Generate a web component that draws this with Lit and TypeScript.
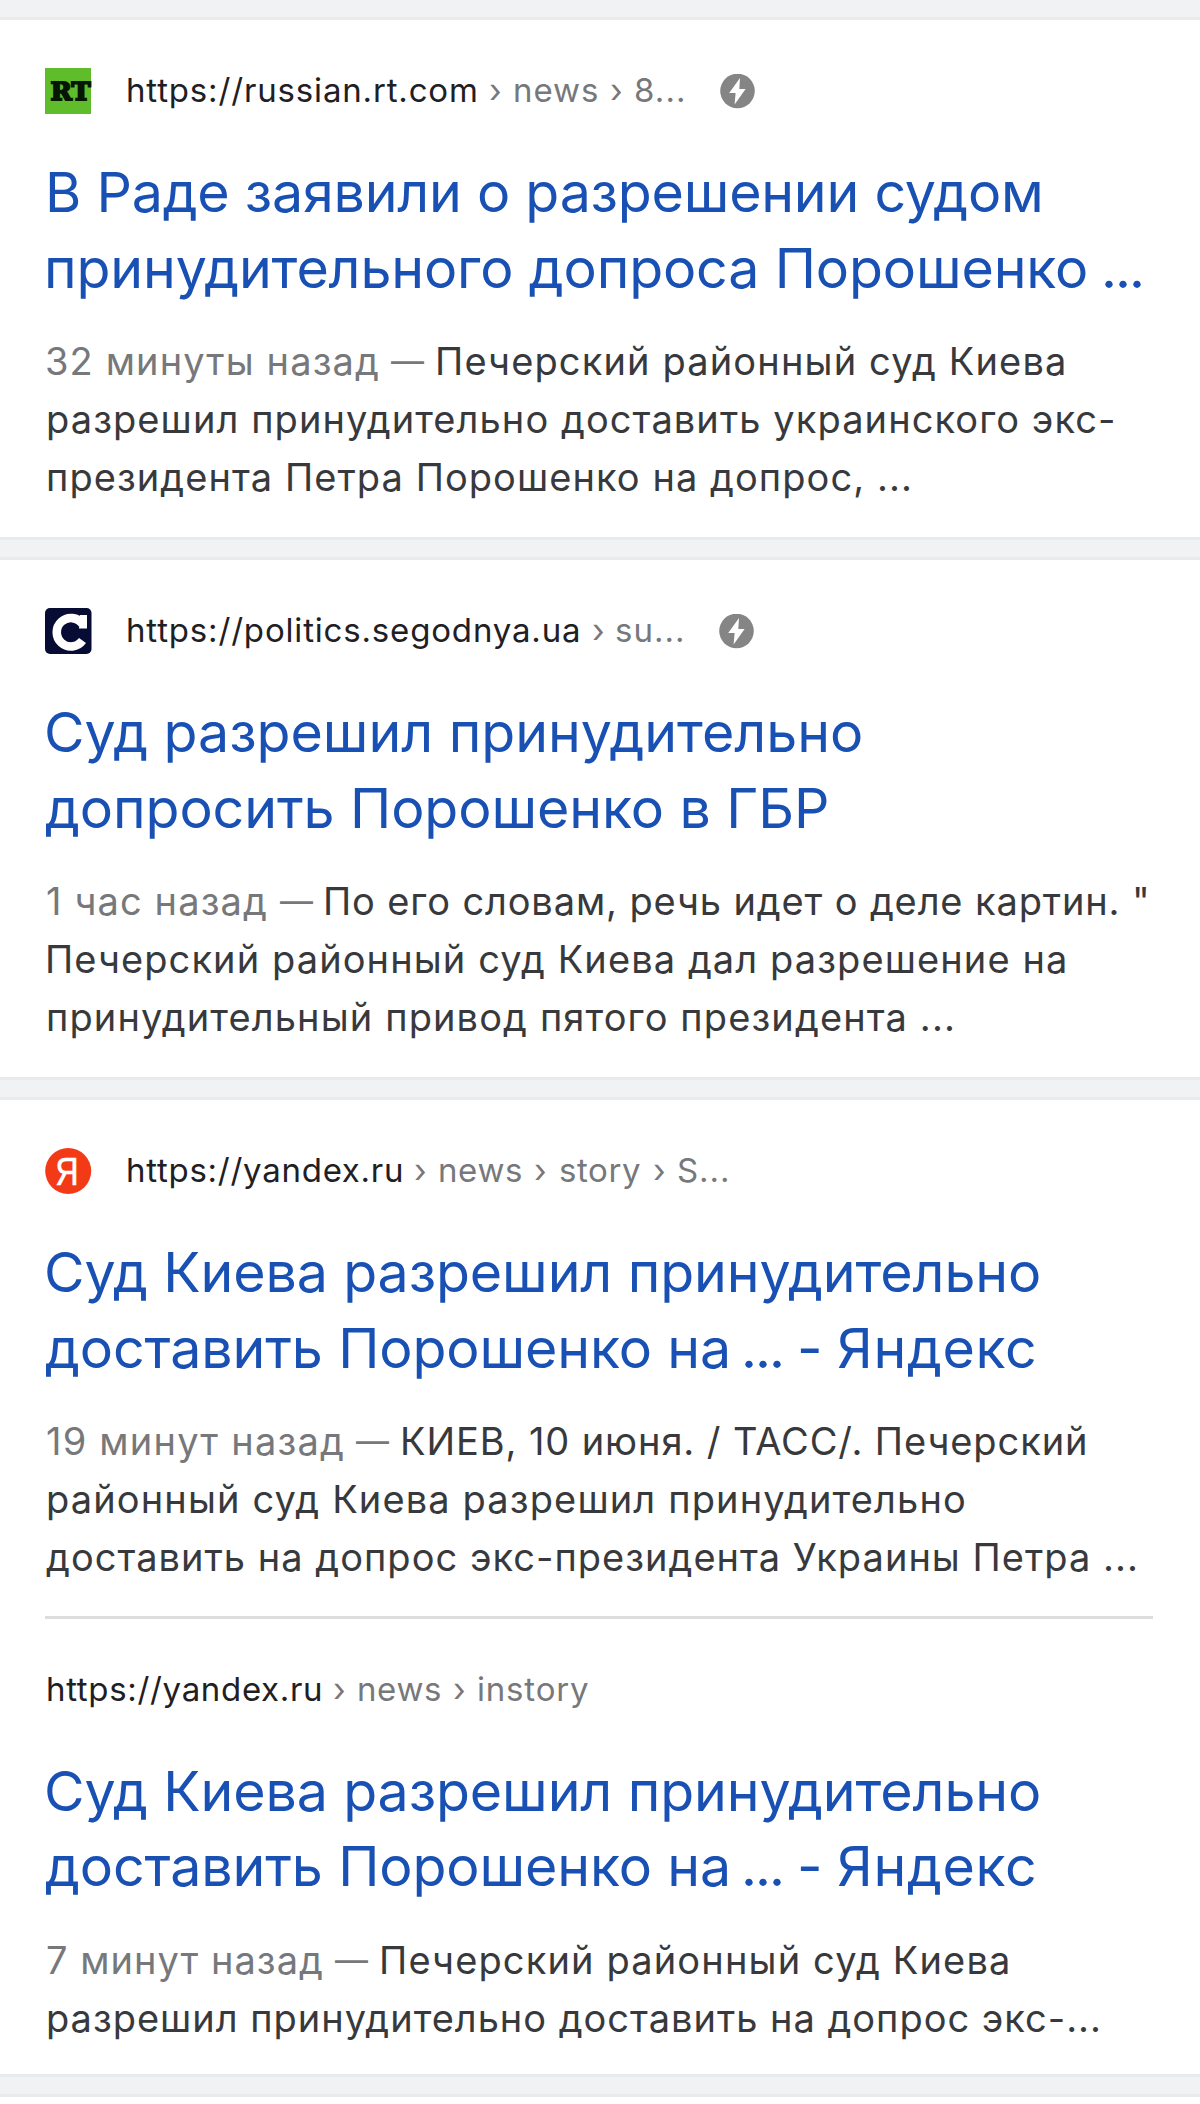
import { LitElement, html, css, svg, TemplateResult } from "lit";
import { customElement, property } from "lit/decorators.js";
import { styleMap } from "lit/directives/style-map.js";

type Kind = "host" | "path" | "title" | "age" | "dash" | "body";
/** Text run: kind, text, left and right edge of its ink. */
type Run = [Kind, string, number, number];

interface Result {
  icon?: "rt" | "segodnya" | "yandex";
  amp?: boolean;
  url: Run[];
  title: Run[][];
  snippet: Run[][];
}

const FONTS: Record<Kind, string> = {
  host: '33px Inter, "Liberation Sans", sans-serif',
  path: '33px Inter, "Liberation Sans", sans-serif',
  title: '55.5px Inter, "Liberation Sans", sans-serif',
  age: '38px Inter, "Liberation Sans", sans-serif',
  dash: '33px Inter, "Liberation Sans", sans-serif',
  body: '38px Inter, "Liberation Sans", sans-serif',
};

const pen = document.createElement("canvas").getContext("2d")!;

@customElement("text-line")
class TextLine extends LitElement {
  @property({ attribute: false }) runs: Run[] = [];
  @property({ type: Number }) start = 0;

  static styles = css`
    :host { display: block; }
    .line { display: flex; height: 100%; }
    .run { display: block; flex: none; white-space: pre; font-kerning: normal; }
    .host { color: #1f2023; }
    .path { color: #77787b; }
    .title { color: #1850b4; }
    .age, .dash { color: #77787b; }
    .body { color: #38393c; }
  `;

  render() {
    let edge = this.start;
    return html`<div class="line">
      ${this.runs.map(([kind, text, x0, x1]) => {
        pen.font = FONTS[kind];
        const m = pen.measureText(text);
        const ink = m.actualBoundingBoxLeft + m.actualBoundingBoxRight;
        const n = text.length - 1;
        const spacing = n > 0 ? (x1 - x0 - ink) / n : 0;
        const style = {
          font: FONTS[kind],
          lineHeight: "inherit",
          width: `${x1 - x0}px`,
          marginLeft: `${x0 - edge}px`,
          textIndent: `${m.actualBoundingBoxLeft}px`,
          letterSpacing: `${spacing}px`,
        };
        edge = x1;
        return html`<span class="run ${kind}" style=${styleMap(style)}>${text}</span>`;
      })}
    </div>`;
  }
}

const ICONS: Record<string, TemplateResult> = {
  rt: svg`<rect width="46" height="46" fill="#5fbd2b"/>
    <text x="5.5" y="31.5" textLength="40" lengthAdjust="spacingAndGlyphs" font-family="DejaVu Serif, serif"
      font-weight="700" font-size="23.5" fill="#071604" stroke="#071604" stroke-width="1.8">RT</text>`,
  segodnya: svg`<rect width="46.5" height="46" rx="5" fill="#070c35"/>
    <path d="M37.5 16A14.2 14.2 0 1 0 37.5 32.5" fill="none" stroke="#fff" stroke-width="8.6"/>
    <path d="M35 7h7v13.5h-8z" fill="#fff"/>`,
  yandex: svg`<circle cx="23.2" cy="23" r="23" fill="#f33a17"/>
    <text x="10.5" y="37" textLength="23" lengthAdjust="spacingAndGlyphs" font-family="Liberation Sans, sans-serif"
      font-size="39" fill="#fff" stroke="#fff" stroke-width=".7">Я</text>`,
};

@customElement("search-result")
class SearchResult extends LitElement {
  @property({ attribute: false }) item!: Result;

  static styles = css`
    :host { display: block; padding-left: 45px; }
    .source { display: flex; align-items: center; height: 50px; }
    .icon { display: block; flex: none; width: 47px; height: 46px; overflow: visible; }
    .url { flex: none; height: 50px; line-height: 48px; }
    .amp { display: block; flex: none; width: 35px; height: 35px; margin-left: 37px; }
    .title { margin-top: 38px; }
    .title-line { height: 75.5px; line-height: 75.5px; }
    .snippet { margin-top: 27px; }
    .snippet-line { height: 58.2px; line-height: 58.2px; }
  `;

  render() {
    const { icon, amp, url, title, snippet } = this.item;
    return html`
      <div class="source">
        ${icon ? html`<svg class="icon" viewBox="0 0 47 46">${ICONS[icon]}</svg>` : ""}
        <text-line class="url" .runs=${url} .start=${icon ? 92 : 45}></text-line>
        ${amp
          ? html`<svg class="amp" viewBox="0 0 35 35">
              <circle cx="17.5" cy="17" r="17.3" fill="#858585" />
              <path d="M20 4 9.2 19h6.4L14.6 30.5 25.6 14.9h-6.3z" fill="#fff" />
            </svg>`
          : ""}
      </div>
      <div class="title">
        ${title.map((r) => html`<text-line class="title-line" .runs=${r} .start=${45}></text-line>`)}
      </div>
      <div class="snippet">
        ${snippet.map((r) => html`<text-line class="snippet-line" .runs=${r} .start=${45}></text-line>`)}
      </div>
    `;
  }
}

const RT: Result = {
  icon: "rt",
  amp: true,
  url: [
    ["host", "https://russian.rt.com", 128, 476],
    ["path", "›", 490, 499],
    ["path", "news", 515, 597],
    ["path", "›", 611, 620],
    ["path", "8...", 635, 683],
  ],
  title: [
    [["title", "В Раде заявили о разрешении судом", 49, 1040]],
    [["title", "принудительного допроса Порошенко", 48, 1086], ["title", "...", 1105, 1141]],
  ],
  snippet: [
    [["age", "32 минуты назад", 47, 378], ["dash", "—", 391, 423], ["body", "Печерский районный суд Киева", 438, 1064]],
    [["body", "разрешил принудительно доставить украинского экс-", 48, 1113]],
    [["body", "президента Петра Порошенко на допрос, ...", 48, 909]],
  ],
};

const SEGODNYA: Result = {
  icon: "segodnya",
  amp: true,
  url: [
    ["host", "https://politics.segodnya.ua", 128, 578],
    ["path", "›", 593, 602],
    ["path", "su...", 616, 682],
  ],
  title: [
    [["title", "Суд разрешил принудительно", 47, 861]],
    [["title", "допросить Порошенко в ГБР", 46, 827]],
  ],
  snippet: [
    [["age", "1 час назад", 47, 266], ["dash", "—", 280, 312], ["body", 'По его словам, речь идет о деле картин. "', 326, 1146]],
    [["body", "Печерский районный суд Киева дал разрешение на", 48, 1065]],
    [["body", "принудительный привод пятого президента ...", 48, 952]],
  ],
};

const YANDEX_TITLE: Run[][] = [
  [["title", "Суд Киева разрешил принудительно", 47, 1039]],
  [
    ["title", "доставить Порошенко на", 46, 727],
    ["title", "...", 745, 781],
    ["title", "-", 800, 819],
    ["title", "Яндекс", 838, 1034],
  ],
];

const YANDEX: Result = {
  icon: "yandex",
  url: [
    ["host", "https://yandex.ru", 128, 401],
    ["path", "›", 415, 424],
    ["path", "news", 440, 521],
    ["path", "›", 535, 544],
    ["path", "story", 560, 640],
    ["path", "›", 654, 663],
    ["path", "S...", 678, 727],
  ],
  title: YANDEX_TITLE,
  snippet: [
    [["age", "19 минут назад", 47, 343], ["dash", "—", 356, 388], ["body", "КИЕВ, 10 июня. / ТАСС/. Печерский", 403, 1085]],
    [["body", "районный суд Киева разрешил принудительно", 48, 964]],
    [["body", "доставить на допрос экс-президента Украины Петра ...", 46, 1135]],
  ],
};

const YANDEX_INSTORY: Result = {
  url: [
    ["host", "https://yandex.ru", 48, 320],
    ["path", "›", 334, 343],
    ["path", "news", 359, 440],
    ["path", "›", 454, 463],
    ["path", "instory", 478, 588],
  ],
  title: YANDEX_TITLE,
  snippet: [
    [["age", "7 минут назад", 47, 322], ["dash", "—", 335, 367], ["body", "Печерский районный суд Киева", 382, 1008]],
    [["body", "разрешил принудительно доставить на допрос экс-...", 48, 1098]],
  ],
};

@customElement("app-root")
class AppRoot extends LitElement {
  static styles = css`
    :host { display: block; width: 1200px; height: 2104px; overflow: hidden; background: #fff; }
    .page { display: flex; flex-direction: column; height: 2104px; }
    .band { flex: none; box-sizing: border-box; height: 23px; background: #f1f2f3;
      border-top: 3px solid #e9eaeb; border-bottom: 3px solid #e9eaec; }
    .band.first { height: 20px; border-top: 0; }
    .card { flex: none; box-sizing: border-box; height: 517px; padding-top: 46px; }
    .card.tall { height: 974px; }
    .rule { width: 1108px; height: 3px; margin: 29.4px 0 46px 45px; background: #dcddde; }
  `;

  render() {
    return html`<main class="page">
      <div class="band first"></div>
      <section class="card"><search-result .item=${RT}></search-result></section>
      <div class="band"></div>
      <section class="card"><search-result .item=${SEGODNYA}></search-result></section>
      <div class="band"></div>
      <section class="card tall">
        <search-result .item=${YANDEX}></search-result>
        <div class="rule"></div>
        <search-result .item=${YANDEX_INSTORY}></search-result>
      </section>
      <div class="band"></div>
    </main>`;
  }
}
